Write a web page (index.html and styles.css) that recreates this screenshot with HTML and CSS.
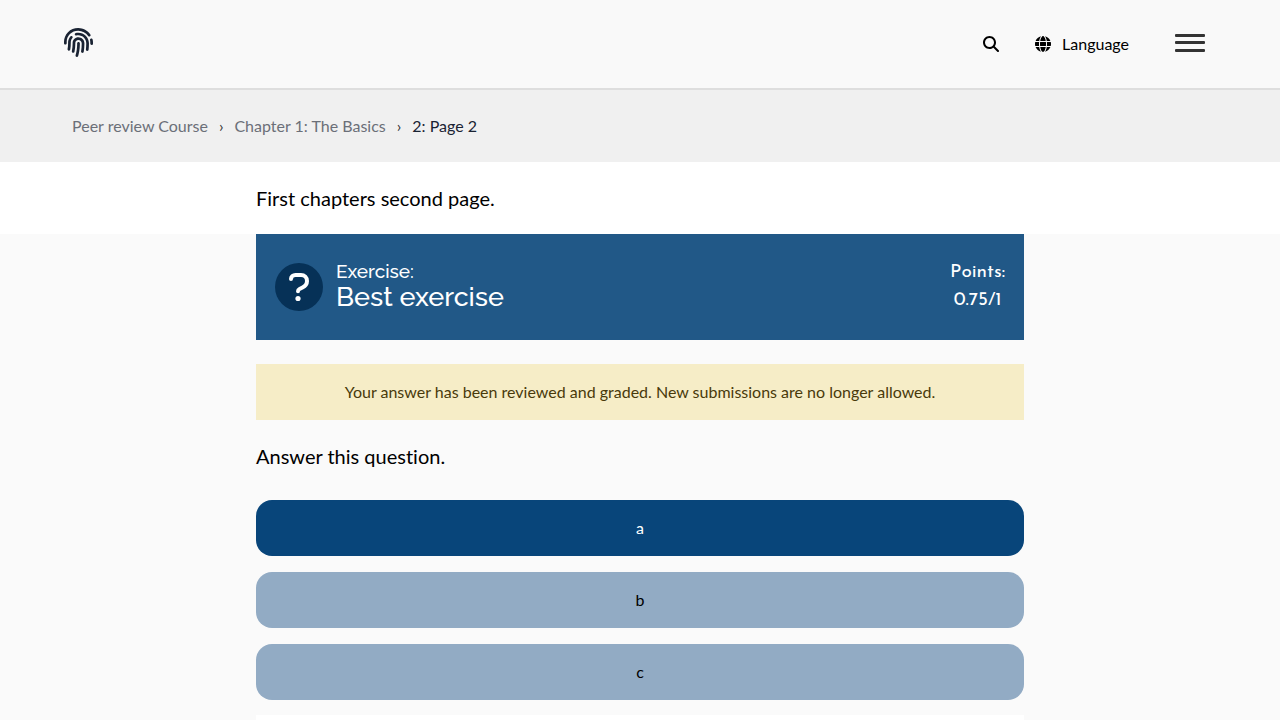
FILE: index.html
```html
<!DOCTYPE html>
<html lang="en">
<head>
<meta charset="utf-8">
<meta name="viewport" content="width=device-width, initial-scale=1">
<title>2: Page 2</title>
<link rel="stylesheet" href="styles.css">
</head>
<body>
<header class="site-header">
  <a class="logo" href="#" aria-label="Home">
    <svg viewBox="0 0 512 512" width="29" height="29" fill="currentColor" aria-hidden="true"><path d="M256.12 245.96c-13.25 0-24 10.74-24 24 1.14 72.25-8.14 141.9-27.7 211.55-2.73 9.72 2.15 30.49 23.12 30.49 10.48 0 20.11-6.92 23.09-17.52 13.53-47.91 31.04-125.41 29.48-224.52.01-13.25-10.73-24-23.99-24zm-.86-81.73C194 164.16 151.25 211.3 152.1 265.32c.75 47.94-3.75 95.91-13.37 142.55-2.69 12.98 5.67 25.69 18.64 28.36 13.05 2.67 25.67-5.66 28.36-18.64 10.34-50.09 15.17-101.58 14.37-153.02-.41-25.95 19.92-52.49 54.45-52.34 31.31.47 57.15 25.34 57.62 55.47.77 48.05-2.81 96.33-10.61 143.55-2.17 13.06 6.69 25.42 19.76 27.58 19.97 3.33 26.81-15.1 27.58-19.77 8.28-50.03 12.06-101.21 11.27-152.11-.88-55.8-47.94-101.88-104.91-102.72zm-110.69-19.78c-10.3-8.34-25.37-6.8-33.76 3.48-25.62 31.5-39.39 71.28-38.75 112 .59 37.58-2.47 75.27-9.11 112.05-2.34 13.05 6.31 25.53 19.36 27.89 20.11 3.5 27.07-14.81 27.89-19.36 7.19-39.84 10.5-80.66 9.86-121.33-.47-29.88 9.2-57.88 28-80.97 8.35-10.28 6.79-25.39-3.49-33.76zm109.47-62.33c-15.41-.41-30.87 1.44-45.78 4.97-12.89 3.06-20.87 15.98-17.83 28.89 3.06 12.89 16 20.83 28.89 17.83 11.05-2.61 22.47-3.77 34-3.69 75.43 1.13 137.73 61.5 138.88 134.58.59 37.88-1.28 76.11-5.58 113.63-1.5 13.17 7.95 25.08 21.11 26.58 16.72 1.95 25.51-11.88 26.58-21.11a929.06 929.06 0 0 0 5.89-119.85c-1.56-98.75-85.07-180.33-186.16-181.83zm252.07 121.45c-2.86-12.92-15.51-21.2-28.61-18.27-12.94 2.86-21.12 15.66-18.26 28.61 4.71 21.41 4.91 37.41 4.7 61.6-.11 13.27 10.55 24.09 23.8 24.2h.2c13.17 0 23.89-10.61 24-23.8.18-22.18.4-44.11-5.83-72.34zm-40.12-90.72C417.29 43.46 337.6 1.29 252.81.02 183.02-.82 118.47 24.91 70.46 72.94 24.09 119.37-.9 181.04.14 246.65l-.12 21.47c-.39 13.25 10.03 24.31 23.28 24.69.23.02.48.02.72.02 12.92 0 23.59-10.3 23.97-23.28l.16-23.64c-.83-52.5 19.16-101.86 56.28-139 38.76-38.8 91.34-59.67 147.68-58.86 69.45 1.03 134.73 35.56 174.62 92.39 7.61 10.86 22.56 13.45 33.42 5.86 10.84-7.62 13.46-22.59 5.84-33.43z"/></svg>
  </a>
  <nav class="tools" aria-label="Site">
    <button class="tool search" type="button" aria-label="Search">
      <svg viewBox="0 0 512 512" width="16" height="16" fill="currentColor" aria-hidden="true"><path d="M416 208c0 45.900-14.900 88.300-40 122.700L502.600 457.400c12.500 12.500 12.500 32.800 0 45.300s-32.800 12.500-45.300 0L330.700 376c-34.400 25.200-76.800 40-122.700 40C93.100 416 0 322.900 0 208S93.100 0 208 0S416 93.100 416 208zM208 352a144 144 0 1 0 0-288 144 144 0 1 0 0 288z"/></svg>
    </button>
    <button class="tool language" type="button">
      <svg viewBox="0 0 512 512" width="16" height="16" fill="currentColor" aria-hidden="true"><path d="M352 256c0 22.200-1.200 43.600-3.300 64H163.300c-2.200-20.400-3.300-41.800-3.300-64s1.200-43.600 3.300-64H348.700c2.200 20.400 3.300 41.800 3.300 64zm28.800-64H503.900c5.300 20.500 8.100 41.900 8.100 64s-2.800 43.500-8.100 64H380.800c2.100-20.600 3.200-42 3.200-64s-1.100-43.400-3.200-64zm112.600-32H376.700c-10-63.900-29.800-117.400-55.300-151.600c78.300 20.700 142 77.500 171.900 151.600zm-149.100 0H167.700c6.100-36.400 15.500-68.600 27-94.700c10.500-23.600 22.200-40.700 33.500-51.500C239.400 3.200 248.700 0 256 0s16.600 3.200 27.800 13.800c11.300 10.800 23 27.900 33.500 51.500c11.600 26 20.900 58.200 27 94.700zm-209 0H18.600C48.600 85.900 112.200 29.100 190.600 8.400C165.100 42.600 145.300 96.100 135.300 160zM8.100 192H131.200c-2.100 20.600-3.200 42-3.200 64s1.100 43.400 3.200 64H8.100C2.800 299.500 0 278.100 0 256s2.800-43.500 8.100-64zM194.700 446.600c-11.600-26-20.900-58.200-27-94.600H344.300c-6.100 36.400-15.500 68.600-27 94.600c-10.500 23.600-22.200 40.700-33.500 51.500C272.600 508.800 263.300 512 256 512s-16.600-3.200-27.800-13.800c-11.300-10.800-23-27.900-33.500-51.500zM135.300 352c10 63.900 29.800 117.400 55.300 151.600C112.200 482.900 48.600 426.100 18.600 352H135.300zm358.100 0c-30 74.100-93.600 130.900-171.900 151.600c25.500-34.200 45.200-87.700 55.300-151.600H493.400z"/></svg>
      <span>Language</span>
    </button>
    <button class="tool menu" type="button" aria-label="Open menu">
      <svg viewBox="0 0 30 18" width="30" height="18" fill="#333" aria-hidden="true"><rect width="30" height="3" rx="1"/><rect y="7" width="30" height="3" rx="1"/><rect y="15" width="30" height="3" rx="1"/></svg>
    </button>
  </nav>
</header>
<nav class="breadcrumbs" aria-label="Breadcrumb">
  <a href="#">Peer review Course</a>
  <span class="separator" aria-hidden="true">›</span>
  <a href="#">Chapter 1: The Basics</a>
  <span class="separator" aria-hidden="true">›</span>
  <span class="current" aria-current="page">2: Page 2</span>
</nav>
<main>
  <p class="column intro">First chapters second page.</p>
  <section class="exercise">
    <div class="column">
      <div class="exercise-header">
        <svg class="exercise-icon" viewBox="0 0 48 48" width="48" height="48" aria-hidden="true"><circle cx="24" cy="24" r="24" fill="#063157"/><path d="M16 16c0-2.500 2-4 4.500-4h5.500c3.500 0 6 2.500 6 6 0 3-1.500 5-4.500 6.500l-3 1.500c-1 .5-1.500 1.300-1.500 2.300" fill="none" stroke="#fff" stroke-width="4" stroke-linecap="round" stroke-linejoin="round"/><circle cx="23" cy="35.500" r="2.600" fill="#fff"/></svg>
        <h2 class="exercise-title"><span class="kind">Exercise:</span><span class="name">Best exercise</span></h2>
        <p class="points"><span>Points:</span><span>0.75/1</span></p>
      </div>
      <p class="notice">Your answer has been reviewed and graded. New submissions are no longer allowed.</p>
      <p class="question">Answer this question.</p>
      <div class="options">
        <button class="option selected" type="button">a</button>
        <button class="option" type="button">b</button>
        <button class="option" type="button">c</button>
      </div>
      <div class="feedback"></div>
    </div>
  </section>
</main>
</body>
</html>
```
FILE: styles.css
```css
* {
  box-sizing: border-box;
}

body {
  margin: 0;
  background: #fff;
  color: #000;
  font-family: Lato, "Open Sans", sans-serif;
  font-size: 16px;
  font-variant-ligatures: none;
  line-height: 24px;
}

p,
h2 {
  margin: 0;
}

button {
  border: 0;
  font: inherit;
  cursor: pointer;
}

svg {
  display: block;
  flex: none;
}

.site-header {
  display: flex;
  justify-content: space-between;
  align-items: center;
  min-height: 90px;
  padding: 0 64px;
  border-bottom: 2px solid #dedede;
  background: #f9f9f9;
}

.logo {
  padding-bottom: 3px;
  color: #1a2333;
}

.tools {
  display: flex;
  align-items: center;
}

.tool {
  display: flex;
  align-items: center;
  padding: 0;
  background: none;
  color: #000;
}

.search {
  margin-right: 36px;
}

.language {
  gap: 11px;
  margin-right: 46px;
}

.menu {
  margin-right: 11px;
  padding-bottom: 2px;
}

.breadcrumbs {
  display: flex;
  align-items: center;
  gap: 11px;
  padding: 24px 72px;
  background: #f0f0f0;
}

.breadcrumbs a {
  color: #6b6f78;
  text-decoration: none;
}

.separator {
  color: #333;
}

.current {
  color: #1a2333;
}

.column {
  width: 60%;
  margin: 0 auto;
}

.intro,
.question {
  font-size: 20px;
  line-height: 32px;
}

.intro {
  padding: 20px 0;
}

.exercise {
  background: #fafafa;
}

.exercise-header {
  display: flex;
  align-items: center;
  gap: 13px;
  min-height: 106px;
  padding: 0 19px;
  background: #215887;
  color: #fff;
}

.exercise-title {
  display: flex;
  flex: 1;
  flex-direction: column;
  padding-bottom: 4px;
  font-family: Raleway, Lato, sans-serif;
  font-weight: 500;
}

.kind {
  font-size: 19px;
  line-height: 24px;
}

.name {
  font-size: 27px;
  line-height: 28px;
}

.points {
  display: flex;
  flex-direction: column;
  align-items: center;
  font-family: "Josefin Sans", Lato, sans-serif;
  font-size: 19px;
  line-height: 28px;
}

.notice {
  margin: 24px 0 20px;
  padding: 16px;
  background: #f6edc7;
  color: #493a0b;
  text-align: center;
}

.question {
  margin-bottom: 28px;
}

.options {
  display: flex;
  flex-direction: column;
  gap: 16px;
}

.option {
  width: 100%;
  padding: 16px;
  border-radius: 16px;
  background: #92abc4;
  color: #000;
}

.option.selected {
  background: #08457a;
  color: #fff;
}

.feedback {
  min-height: 120px;
  margin-top: 15px;
  background: #fff;
}
```
